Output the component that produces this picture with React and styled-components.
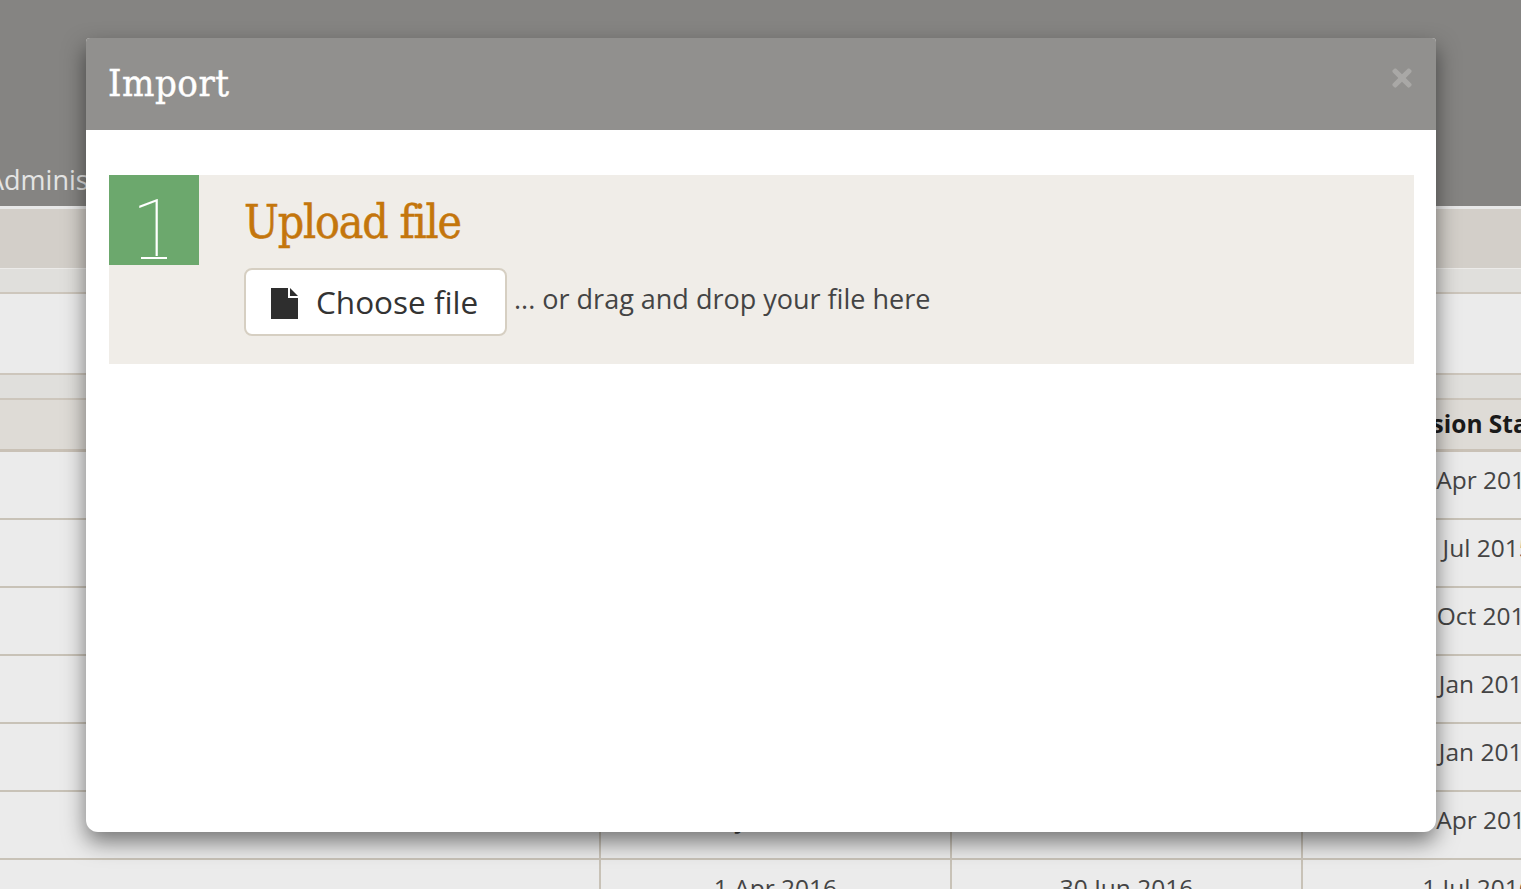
import React from 'react';
import styled, { createGlobalStyle } from 'styled-components';
import { FaTimes } from 'react-icons/fa';

const rows = [
    ['1 Jan 2015', '31 Mar 2015', '1 Apr 2015'],
    ['1 Apr 2015', '30 Jun 2015', '1 Jul 2015'],
    ['1 Jul 2015', '30 Sep 2015', '1 Oct 2015'],
    ['1 Oct 2015', '31 Dec 2015', '1 Jan 2016'],
    ['1 Oct 2015', '31 Dec 2015', '1 Jan 2016'],
    ['1 Jan 2016', '31 Mar 2016', '1 Apr 2016'],
    ['1 Apr 2016', '30 Jun 2016', '1 Jul 2016'],
];

const App = () => {
    return (<>
        <GlobalStyle />
        <Page>
            <TopBar><NavItem>Administration</NavItem></TopBar>
            <TitleBand />
            <SubBand />
            <FilterArea />
            <GroupRow />
            <Table>
                <HeadCell />
                <HeadCell>Start</HeadCell>
                <HeadCell>End</HeadCell>
                <HeadCell>Session Start</HeadCell>
                {rows.map((row, i) => (
                    <React.Fragment key={i}>
                        <Cell />
                        {row.map((value, j) => <Cell key={j}>{value}</Cell>)}
                    </React.Fragment>
                ))}
            </Table>
            <Modal>
                <ModalHeader>
                    <ModalTitle>Import</ModalTitle>
                    <CloseButton><FaTimes /></CloseButton>
                </ModalHeader>
                <ModalBody>
                    <Step>
                        <StepNumber>1</StepNumber>
                        <StepContent>
                            <StepTitle>Upload file</StepTitle>
                            <UploadRow>
                                <ChooseButton>
                                    <FileGlyph viewBox="0 0 27 31">
                                        <path d="M0 0H17V10H27V31H0Z" fill="#2e2e2e" />
                                        <path d="M19 0L27 8H19Z" fill="#2e2e2e" />
                                    </FileGlyph>
                                    Choose file
                                </ChooseButton>
                                <DropHint>... or drag and drop your file here</DropHint>
                            </UploadRow>
                        </StepContent>
                    </Step>
                </ModalBody>
            </Modal>
        </Page>
    </>);
};

const GlobalStyle = createGlobalStyle`
    html, body {
        margin: 0;
        padding: 0;
        background: #ebebeb;
    }

    * {
        box-sizing: border-box;
    }
`;

const Page = styled.div`
    position: relative;
    width: 1521px;
    height: 889px;
    overflow: hidden;
    font-family: "Open Sans", sans-serif;
    background: #ebebeb;
`;

const TopBar = styled.div`
    height: 209px;
    background: #858482;
    border-bottom: 3px solid #e8e8e8;
    padding-top: 161px;
`;

const NavItem = styled.span`
    display: block;
    width: 99px;
    margin-left: -13px;
    overflow: hidden;
    font-size: 27px;
    line-height: 38px;
    color: #e4e4e4;
    white-space: nowrap;
`;

const TitleBand = styled.div`
    height: 60px;
    background: #d3cfc9;
    border-bottom: 1px solid #ecebe9;
`;

const SubBand = styled.div`
    height: 25px;
    background: #e0dfdc;
    border-bottom: 2px solid #cdc6bc;
`;

const FilterArea = styled.div`
    height: 79px;
    background: #ebebeb;
`;

const GroupRow = styled.div`
    height: 27px;
    background: #e0dfdc;
    border-top: 2px solid #cdc6bc;
    border-bottom: 2px solid #cdc6bc;
`;

const Table = styled.div`
    display: grid;
    grid-template-columns: 601px 351px 351px 351px;
    grid-auto-rows: 68px;
    grid-template-rows: 52px;
    width: 1654px;
`;

const HeadCell = styled.div`
    display: flex;
    align-items: center;
    justify-content: center;
    padding: 0 16px 2px 0;
    background: #dedbd6;
    border-bottom: 3px solid #c9c1b6;
    font-size: 24.5px;
    font-weight: 700;
    color: #1a1a1a;
    white-space: nowrap;
`;

const Cell = styled.div`
    display: flex;
    align-items: center;
    justify-content: center;
    padding-bottom: 12px;
    border-bottom: 2px solid #c8c2b7;
    border-right: 2px solid #c8c2b7;
    font-size: 24.5px;
    color: #444444;
    white-space: nowrap;
`;

const Modal = styled.div`
    position: absolute;
    left: 86px;
    top: 38px;
    width: 1350px;
    height: 794px;
    display: flex;
    flex-direction: column;
    background: #ffffff;
    border-radius: 4px 4px 12px 12px;
    box-shadow: 0 10px 22px rgba(0, 0, 0, 0.5);
    overflow: hidden;
`;

const ModalHeader = styled.div`
    height: 92px;
    flex-shrink: 0;
    display: flex;
    justify-content: space-between;
    padding: 22px 23px 0 22px;
    background: #91908e;
`;

const ModalTitle = styled.h3`
    margin: 0;
    font-family: "DejaVu Serif Condensed", "DejaVu Serif", serif;
    font-size: 38px;
    font-weight: 400;
    line-height: 46px;
    letter-spacing: 0.5px;
    -webkit-text-stroke: 0.4px #ffffff;
    color: #ffffff;
`;

const CloseButton = styled.span`
    display: flex;
    height: 36px;
    margin-right: -3px;
    align-items: center;
    font-size: 28px;
    color: #a9a8a6;
`;

const ModalBody = styled.div`
    padding: 45px 22px 0 23px;
`;

const Step = styled.div`
    display: flex;
    height: 189px;
    background: #f0ede8;
`;

const StepNumber = styled.div`
    position: relative;
    width: 90px;
    height: 90px;
    padding-top: 18px;
    flex-shrink: 0;
    background: #6ca86d;
    text-align: center;
    font-family: Roboto, sans-serif;
    font-size: 80px;
    font-weight: 100;
    line-height: 72px;
    color: #ffffff;

    &::after {
        content: "";
        position: absolute;
        left: 32px;
        top: 82px;
        width: 26px;
        height: 2px;
        background: #ffffff;
    }
`;

const StepContent = styled.div`
    padding-left: 45px;
`;

const StepTitle = styled.h2`
    margin: 0;
    height: 93px;
    font-family: "DejaVu Serif Condensed", "DejaVu Serif", serif;
    font-size: 46px;
    font-weight: 400;
    line-height: 94px;
    letter-spacing: -1.2px;
    -webkit-text-stroke: 0.5px #c4760c;
    color: #c4760c;
    white-space: nowrap;
`;

const UploadRow = styled.div`
    display: flex;
    align-items: flex-start;
    gap: 7px;
`;

const ChooseButton = styled.button`
    display: flex;
    align-items: center;
    gap: 18px;
    width: 263px;
    height: 68px;
    padding: 0 0 2px 25px;
    background: #ffffff;
    border: 2px solid #d6cfc2;
    border-radius: 8px;
    font-family: "Open Sans", sans-serif;
    font-size: 31.5px;
    color: #333333;
`;

const FileGlyph = styled.svg`
    width: 27px;
    height: 31px;
    margin-top: 5px;
    flex-shrink: 0;
`;

const DropHint = styled.span`
    padding-top: 12px;
    font-size: 27px;
    color: #444444;
    white-space: nowrap;
`;

export default App;
